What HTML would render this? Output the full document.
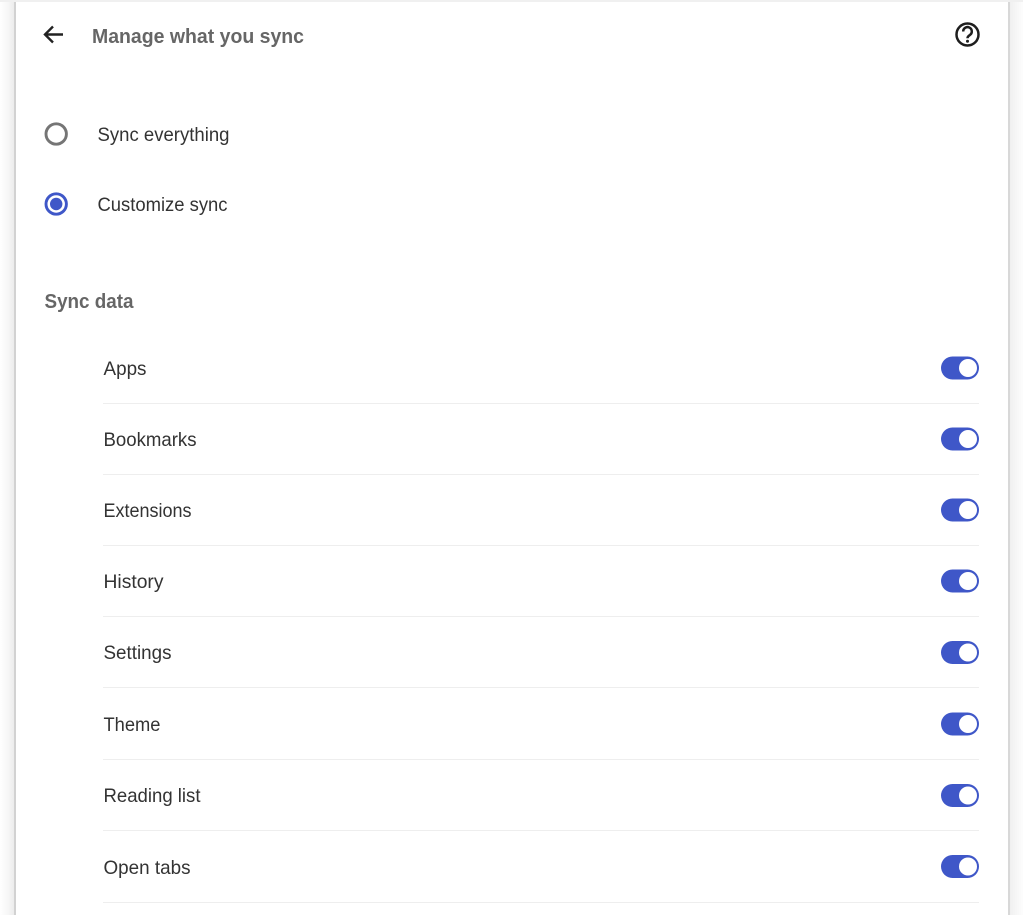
<!DOCTYPE html>
<html>
<head>
<meta charset="utf-8">
<style>
html,body{margin:0;padding:0;width:1023px;height:915px;overflow:hidden;background:#fff}
svg{display:block;position:absolute;left:0;top:0}
text{font-family:"Liberation Sans",sans-serif}
.t{font-size:19.500px;fill:#333}
.h{font-size:20.500px;fill:#666;font-weight:bold}
</style>
</head>
<body>
<svg width="1023" height="915" viewBox="0 0 1023 915" xmlns="http://www.w3.org/2000/svg">
<defs>
<linearGradient id="l" x1="0" x2="1" y1="0" y2="0"><stop offset="0" stop-color="#fff"/><stop offset="0.6" stop-color="#f6f6f6"/><stop offset="1" stop-color="#ececec"/></linearGradient>
<linearGradient id="r" x1="0" x2="1" y1="0" y2="0"><stop offset="0" stop-color="#f0f0f0"/><stop offset="1" stop-color="#fdfdfd"/></linearGradient>
<g id="sw"><rect x="0" y="0" width="38" height="23" rx="11.500" fill="#3f57c8"/><circle cx="27" cy="11.500" r="9" fill="#fff"/></g>
</defs>
<rect width="1023" height="915" fill="#fff"/>
<rect x="0" y="0" width="14" height="915" fill="url(#l)"/>
<rect x="14" y="0" width="2" height="915" fill="#d2d2d2"/>
<rect x="1008" y="0" width="2" height="915" fill="#d8d8d8"/>
<rect x="1010" y="0" width="13" height="915" fill="url(#r)"/>
<rect x="0" y="0" width="1023" height="2" fill="#f0f0f0"/>

<path d="M63 34.500H46M53 26.500l-8 8 8 8" fill="none" stroke="#222" stroke-width="2.400"/>
<text class="h" x="92" y="43" textLength="212" lengthAdjust="spacingAndGlyphs">Manage what you sync</text>
<circle cx="967.500" cy="34.500" r="11" fill="none" stroke="#1e1e1e" stroke-width="2.500"/>
<path d="M963.200 31.500a4.300 4.300 0 1 1 6.800 3.400c-1.600 1-2.500 1.700-2.500 3.300" fill="none" stroke="#1e1e1e" stroke-width="2.500"/>
<circle cx="967.500" cy="41.200" r="1.500" fill="#1e1e1e"/>

<circle cx="56.200" cy="134" r="10.200" fill="none" stroke="#757575" stroke-width="2.900"/>
<text class="t" x="97.500" y="141" textLength="132" lengthAdjust="spacingAndGlyphs">Sync everything</text>
<circle cx="56.200" cy="204" r="10.200" fill="none" stroke="#3f57c8" stroke-width="2.900"/>
<circle cx="56.200" cy="204" r="6.200" fill="#3f57c8"/>
<text class="t" x="97.500" y="211" textLength="130" lengthAdjust="spacingAndGlyphs">Customize sync</text>

<text class="h" x="44.500" y="308" textLength="89" lengthAdjust="spacingAndGlyphs">Sync data</text>

<text class="t" x="103.500" y="375" textLength="43" lengthAdjust="spacingAndGlyphs">Apps</text>
<use href="#sw" x="941" y="356.500"/>
<rect x="103" y="403" width="876" height="1" fill="#eeeeee"/>

<text class="t" x="103.500" y="446" textLength="93" lengthAdjust="spacingAndGlyphs">Bookmarks</text>
<use href="#sw" x="941" y="427.500"/>
<rect x="103" y="474" width="876" height="1" fill="#eeeeee"/>

<text class="t" x="103.500" y="517" textLength="88" lengthAdjust="spacingAndGlyphs">Extensions</text>
<use href="#sw" x="941" y="498.500"/>
<rect x="103" y="545" width="876" height="1" fill="#eeeeee"/>

<text class="t" x="103.500" y="588" textLength="60" lengthAdjust="spacingAndGlyphs">History</text>
<use href="#sw" x="941" y="569.500"/>
<rect x="103" y="616" width="876" height="1" fill="#eeeeee"/>

<text class="t" x="103.500" y="659" textLength="68" lengthAdjust="spacingAndGlyphs">Settings</text>
<use href="#sw" x="941" y="641"/>
<rect x="103" y="687" width="876" height="1" fill="#eeeeee"/>

<text class="t" x="103.500" y="731" textLength="57" lengthAdjust="spacingAndGlyphs">Theme</text>
<use href="#sw" x="941" y="712.500"/>
<rect x="103" y="759" width="876" height="1" fill="#eeeeee"/>

<text class="t" x="103.500" y="802" textLength="97" lengthAdjust="spacingAndGlyphs">Reading list</text>
<use href="#sw" x="941" y="784"/>
<rect x="103" y="830" width="876" height="1" fill="#eeeeee"/>

<text class="t" x="103.500" y="874" textLength="87" lengthAdjust="spacingAndGlyphs">Open tabs</text>
<use href="#sw" x="941" y="855"/>
<rect x="103" y="902" width="876" height="1" fill="#eeeeee"/>
</svg>
</body>
</html>
